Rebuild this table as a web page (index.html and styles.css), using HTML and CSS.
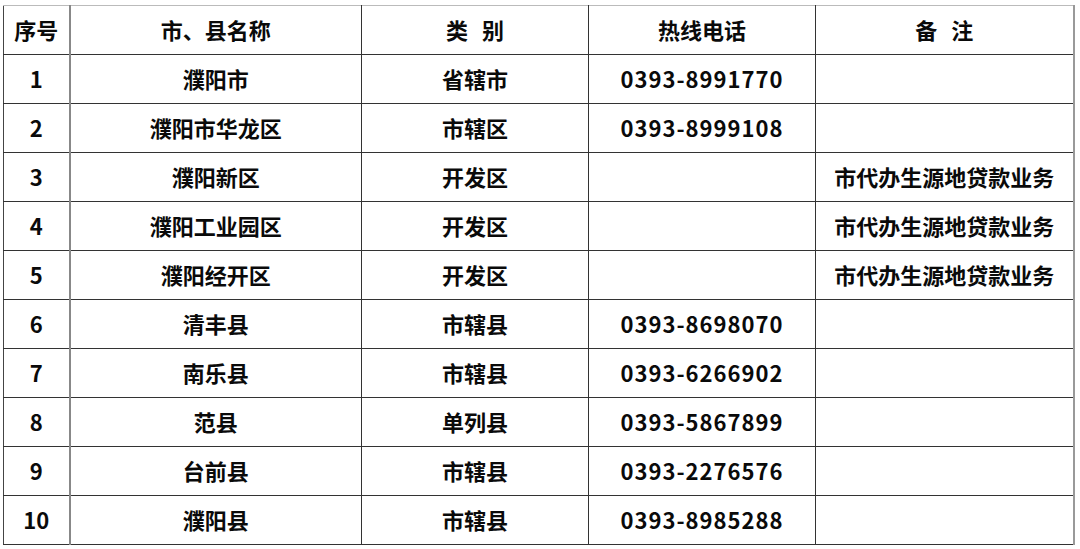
FILE: index.html
```html
<!DOCTYPE html>
<html lang="zh-CN">
<head>
<meta charset="utf-8">
<link rel="stylesheet" href="styles.css">
</head>
<body>
<table class="hotline">
  <colgroup>
    <col class="c-no">
    <col class="c-name">
    <col class="c-type">
    <col class="c-tel">
    <col class="c-note">
  </colgroup>
  <thead>
    <tr><th>序号</th><th>市、县名称</th><th class="spaced">类 别</th><th>热线电话</th><th class="spaced">备 注</th></tr>
  </thead>
  <tbody>
    <tr><td>1</td><td>濮阳市</td><td>省辖市</td><td class="tel">0393-8991770</td><td></td></tr>
    <tr><td>2</td><td>濮阳市华龙区</td><td>市辖区</td><td class="tel">0393-8999108</td><td></td></tr>
    <tr><td>3</td><td>濮阳新区</td><td>开发区</td><td class="tel"></td><td>市代办生源地贷款业务</td></tr>
    <tr><td>4</td><td>濮阳工业园区</td><td>开发区</td><td class="tel"></td><td>市代办生源地贷款业务</td></tr>
    <tr><td>5</td><td>濮阳经开区</td><td>开发区</td><td class="tel"></td><td>市代办生源地贷款业务</td></tr>
    <tr><td>6</td><td>清丰县</td><td>市辖县</td><td class="tel">0393-8698070</td><td></td></tr>
    <tr><td>7</td><td>南乐县</td><td>市辖县</td><td class="tel">0393-6266902</td><td></td></tr>
    <tr><td>8</td><td>范县</td><td>单列县</td><td class="tel">0393-5867899</td><td></td></tr>
    <tr><td>9</td><td>台前县</td><td>市辖县</td><td class="tel">0393-2276576</td><td></td></tr>
    <tr><td>10</td><td>濮阳县</td><td>市辖县</td><td class="tel">0393-8985288</td><td></td></tr>
  </tbody>
</table>
</body>
</html>
```
FILE: styles.css
```css
html, body {
  margin: 0;
  padding: 0;
  background: #ffffff;
}
body {
  padding: 5px 0 0 3px;
  font-family: "Noto Sans CJK SC", "Noto Sans", sans-serif;
  color: #0a0a0a;
}
.hotline {
  border-collapse: collapse;
  table-layout: fixed;
  width: 1071px;
}
.c-no { width: 66px; }
.c-name { width: 292px; }
.c-type { width: 227px; }
.c-tel { width: 227px; }
.c-note { width: 258px; }
.hotline th,
.hotline td {
  height: 45px;
  padding: 0 0 3px 0;
  border: 1px solid #333333;
  text-align: center;
  vertical-align: middle;
  font-size: 22px;
  font-weight: 700;
  line-height: 1;
  white-space: nowrap;
}
.hotline thead th {
  border-top-color: #bbbbbb;
}
.hotline .spaced {
  word-spacing: 9px;
}
.hotline tr > :first-child {
  border-left-color: #444444;
}
.hotline tr > :nth-child(2) {
  border-left-color: #888888;
  border-left-width: 2px;
}
.hotline tr > :last-child {
  border-right-color: #999999;
  border-right-width: 2px;
}
.hotline .tel {
  letter-spacing: 1px;
}
```
